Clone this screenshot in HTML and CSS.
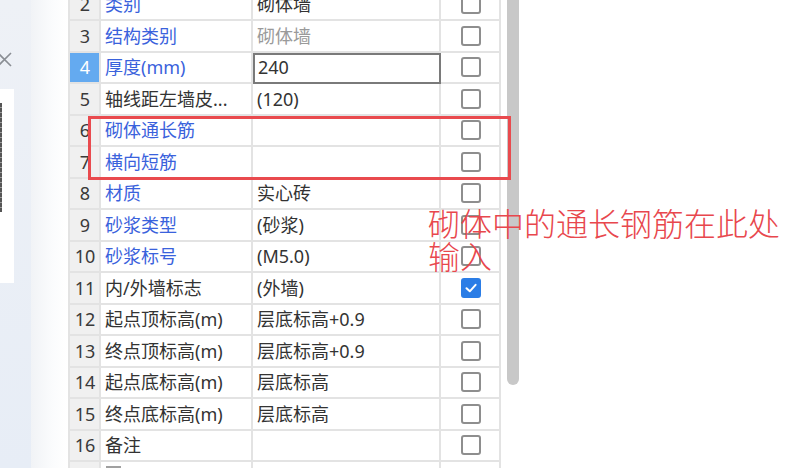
FILE: index.html
```html
<!DOCTYPE html>
<html lang="zh-CN">
<head>
<meta charset="utf-8">
<title>属性编辑器</title>
<link rel="stylesheet" href="styles.css">
</head>
<body>
<div class="screen">
  <aside class="dock">
    <div class="dock-close">
      <svg width="16" height="16" viewBox="0 0 16 16"><path d="M0 1 L13 14 M13 1 L0 14" stroke="#8a8e94" stroke-width="1.6" fill="none"/></svg>
    </div>
    <div class="dock-panel"><span class="dock-mark"></span></div>
  </aside>
  <div class="fade"></div>

  <section class="grid-wrap">
    <div class="grid">
      <div class="row"><div class="num">2</div><div class="name blue">类别</div><div class="val">砌体墙</div><div class="chk"><span class="box"></span></div></div>
      <div class="row"><div class="num">3</div><div class="name blue">结构类别</div><div class="val muted">砌体墙</div><div class="chk"><span class="box"></span></div></div>
      <div class="row"><div class="num current">4</div><div class="name blue">厚度(mm)</div><div class="val editing">240</div><div class="chk"><span class="box"></span></div></div>
      <div class="row"><div class="num">5</div><div class="name">轴线距左墙皮...</div><div class="val">(120)</div><div class="chk"><span class="box"></span></div></div>
      <div class="row"><div class="num">6</div><div class="name blue">砌体通长筋</div><div class="val"></div><div class="chk"><span class="box"></span></div></div>
      <div class="row"><div class="num">7</div><div class="name blue">横向短筋</div><div class="val"></div><div class="chk"><span class="box"></span></div></div>
      <div class="row"><div class="num">8</div><div class="name blue">材质</div><div class="val">实心砖</div><div class="chk"><span class="box"></span></div></div>
      <div class="row"><div class="num">9</div><div class="name blue">砂浆类型</div><div class="val">(砂浆)</div><div class="chk"><span class="box"></span></div></div>
      <div class="row"><div class="num">10</div><div class="name blue">砂浆标号</div><div class="val">(M5.0)</div><div class="chk"><span class="box"></span></div></div>
      <div class="row"><div class="num">11</div><div class="name">内/外墙标志</div><div class="val">(外墙)</div><div class="chk"><span class="box checked"><svg width="14" height="14" viewBox="0 0 14 14"><path d="M2.5 7.2 L5.8 10.3 L11.6 3.8" stroke="#fff" stroke-width="2" fill="none" stroke-linecap="round" stroke-linejoin="round"/></svg></span></div></div>
      <div class="row"><div class="num">12</div><div class="name">起点顶标高(m)</div><div class="val">层底标高+0.9</div><div class="chk"><span class="box"></span></div></div>
      <div class="row"><div class="num">13</div><div class="name">终点顶标高(m)</div><div class="val">层底标高+0.9</div><div class="chk"><span class="box"></span></div></div>
      <div class="row"><div class="num">14</div><div class="name">起点底标高(m)</div><div class="val">层底标高</div><div class="chk"><span class="box"></span></div></div>
      <div class="row"><div class="num">15</div><div class="name">终点底标高(m)</div><div class="val">层底标高</div><div class="chk"><span class="box"></span></div></div>
      <div class="row"><div class="num">16</div><div class="name">备注</div><div class="val"></div><div class="chk"><span class="box"></span></div></div>
      <div class="row"><div class="num">17</div><div class="name"><span class="expand"></span>钢筋业务属性</div><div class="val"></div><div class="chk"></div></div>
    </div>
  </section>

  <div class="vscroll"><div class="thumb"></div></div>
  <div class="blank"></div>

  <div class="callout-box"></div>
  <p class="callout-text">砌体中的通长钢筋在此处<br>输入</p>
</div>
</body>
</html>
```

FILE: styles.css
```css
html, body {
  margin: 0;
  padding: 0;
  background: #ffffff;
}

.screen {
  position: relative;
  width: 805px;
  height: 468px;
  overflow: hidden;
  display: flex;
  font-family: "Noto Sans", "Noto Sans CJK SC", sans-serif;
  font-size: 18px;
  color: #333333;
}

/* left dock */
.dock {
  width: 31px;
  flex: none;
  background: linear-gradient(to bottom, #eef1f6, #e7edf6);
  display: flex;
  flex-direction: column;
  overflow: hidden;
}

.dock-close {
  margin-top: 52px;
  margin-left: -2px;
  height: 16px;
}

.dock-close svg {
  display: block;
}

.dock-panel {
  margin-top: 21px;
  width: 14px;
  height: 194px;
  background: #ffffff;
  display: flex;
  flex-direction: column;
}

.dock-mark {
  margin-top: 14px;
  width: 2px;
  height: 109px;
  background: repeating-linear-gradient(to bottom, #555 0 4px, #999 4px 5px);
}

.fade {
  width: 37px;
  flex: none;
  background: linear-gradient(to right, #f1f3f6, #fbfcfd 60%, #ffffff);
}

/* property grid */
.grid-wrap {
  width: 433px;
  flex: none;
  height: 468px;
  overflow: hidden;
}

.grid {
  margin-top: -10.5px;
}

.row {
  display: grid;
  grid-template-columns: 31px 152px 188px 60px;
  height: 31.5px;
  box-sizing: border-box;
  border-left: 2px solid #e3e3e3;
}

.row > div {
  box-sizing: border-box;
  border-right: 2px solid #e3e3e3;
  border-bottom: 2px solid #e3e3e3;
  display: flex;
  align-items: center;
  white-space: nowrap;
  overflow: hidden;
  line-height: 1;
}

.num {
  background: #f0f0f0;
  justify-content: center;
  color: #3a3a3a;
  padding-left: 1px;
}

.num.current {
  background: #64aaf0;
  color: #ffffff;
}

.name {
  padding-left: 4px;
  color: #333333;
}

.name.blue {
  color: #3a62dc;
}

.val {
  padding-left: 4px;
  color: #333333;
}

.val.muted {
  color: #9a9a9a;
}

.val.editing {
  outline: 2px solid #7a7a7a;
  outline-offset: -2px;
  padding-left: 5px;
}

.chk {
  justify-content: center;
  padding-left: 2px;
}

.box {
  width: 20px;
  height: 20px;
  box-sizing: border-box;
  border: 2px solid #8e8e8e;
  border-radius: 3px;
  background: #ffffff;
  display: flex;
  align-items: center;
  justify-content: center;
}

.box.checked {
  background: #2b7de6;
  border-color: #2b7de6;
}

.expand {
  width: 15px;
  height: 15px;
  box-sizing: border-box;
  border: 2px solid #a0a0a0;
  background: #e8e8e8;
  margin-right: 6px;
  margin-left: 1px;
  align-self: flex-start;
  margin-top: 4px;
  flex: none;
}

/* scrollbar */
.vscroll {
  width: 12px;
  flex: none;
  margin-left: 6px;
  height: 468px;
}

.thumb {
  height: 385px;
  background: #c8c8c8;
  border-radius: 0 0 6px 6px;
}

.blank {
  flex: 1;
  background: #ffffff;
}

/* annotation overlays */
.callout-box {
  position: absolute;
  left: 88px;
  top: 116px;
  width: 423px;
  height: 64px;
  box-sizing: border-box;
  border: 3px solid #e94a4e;
  z-index: 2;
}

.callout-text {
  position: absolute;
  left: 428px;
  top: 206px;
  margin: 0;
  font-family: "Noto Sans CJK SC Light", "Noto Sans CJK SC DemiLight", "Noto Sans CJK SC", sans-serif;
  font-weight: 100;
  font-size: 32px;
  line-height: 33px;
  color: #e8474d;
  z-index: 3;
  white-space: nowrap;
}
```
